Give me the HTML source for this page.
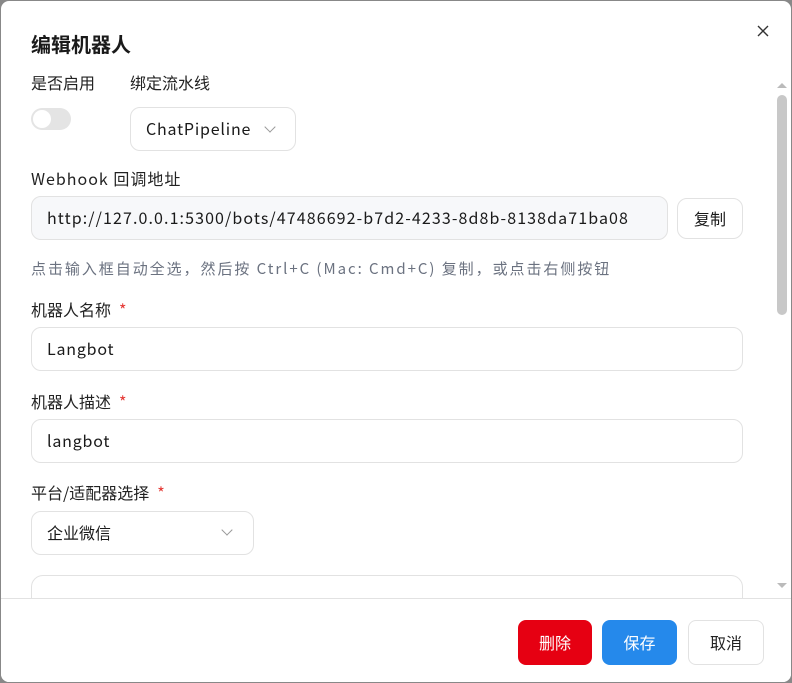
<!DOCTYPE html>
<html><head><meta charset="utf-8"><style>
*{box-sizing:border-box;margin:0;padding:0}
html,body{width:792px;height:683px;overflow:hidden;background:#888}
body{font-family:"Noto Sans CJK SC","Liberation Sans",sans-serif;color:#1a1a1a;position:relative;line-height:1.2}
.dlg{position:absolute;left:1px;top:1px;width:790px;height:681px;background:#fff;border-radius:8px;overflow:hidden}
.a{position:absolute}
.lbl{font-size:16px;color:#222}
.box{position:absolute;border:1px solid #e2e2e2;border-radius:10px;background:#fff;font-size:16px;display:flex;align-items:center;padding-left:15px}
.star{color:#e53935;margin-left:8px}
.chev{position:absolute;width:8px;height:8px;border-right:1.3px solid #999;border-bottom:1.3px solid #999;transform:rotate(45deg)}
.btn{position:absolute;top:619px;height:45px;border-radius:8px;font-size:16px;display:flex;align-items:center;justify-content:center}
</style></head><body>
<div class="dlg">
<div class="a" style="left:30px;top:31px;font-size:20px;font-weight:bold">编辑机器人</div>
<svg class="a" style="left:756px;top:24px" width="12" height="12" viewBox="0 0 12 12"><path d="M1 1L11 11M11 1L1 11" stroke="#333" stroke-width="1.4"/></svg>
<div class="a lbl" style="left:30px;top:72px">是否启用</div>
<div class="a lbl" style="left:129px;top:72px">绑定流水线</div>
<div class="a" style="left:30px;top:107px;width:40px;height:22px;border-radius:11px;background:#e4e4e4"><div style="position:absolute;left:2px;top:2px;width:18px;height:18px;border-radius:50%;background:#fff"></div></div>
<div class="box" style="left:129px;top:106px;width:166px;height:44px;letter-spacing:0.8px">ChatPipeline<div class="chev" style="left:135px;top:15px"></div></div>
<div class="a lbl" style="left:30px;top:168px;letter-spacing:1px">Webhook 回调地址</div>
<div class="box" style="left:30px;top:195px;width:637px;height:44px;background:#f7f8fa;white-space:nowrap;overflow:hidden;letter-spacing:1.1px">http://127.0.0.1:5300/bots/47486692-b7d2-4233-8d8b-8138da71ba08</div>
<div class="box" style="left:676px;top:197px;width:66px;height:41px;padding:0;justify-content:center">复制</div>
<div class="a" style="left:30px;top:259px;font-size:15px;color:#6b7280;white-space:nowrap;letter-spacing:1.95px">点击输入框自动全选，然后按 Ctrl+C (Mac: Cmd+C) 复制，或点击右侧按钮</div>
<div class="a lbl" style="left:30px;top:299px">机器人名称<span class="star">*</span></div>
<div class="box" style="left:30px;top:326px;width:712px;height:44px;letter-spacing:0.8px">Langbot</div>
<div class="a lbl" style="left:30px;top:391px">机器人描述<span class="star">*</span></div>
<div class="box" style="left:30px;top:418px;width:712px;height:44px;letter-spacing:0.8px">langbot</div>
<div class="a lbl" style="left:30px;top:482px">平台/适配器选择<span class="star">*</span></div>
<div class="box" style="left:30px;top:510px;width:223px;height:44px">企业微信<div class="chev" style="left:191px;top:14px"></div></div>
<div class="a" style="left:30px;top:574px;width:712px;height:40px;border:1px solid #e2e2e2;border-radius:12px"></div>
<div class="a" style="left:776px;top:94px;width:10px;height:220px;border-radius:5px;background:#c8c8c8"></div>
<div class="a" style="left:776px;top:82px;width:0;height:0;border-left:5px solid transparent;border-right:5px solid transparent;border-bottom:5px solid #bbb"></div>
<div class="a" style="left:776px;top:582px;width:0;height:0;border-left:5px solid transparent;border-right:5px solid transparent;border-top:5px solid #bbb"></div>
<div class="a" style="left:0;top:597px;width:790px;height:84px;background:#fff;border-top:1px solid #e2e2e2"></div>
<div class="btn" style="left:517px;width:74px;background:#e60012;color:#fff">删除</div>
<div class="btn" style="left:601px;width:75px;background:#2589eb;color:#fff">保存</div>
<div class="btn" style="left:687px;width:76px;border:1px solid #e2e2e2;color:#222">取消</div>
</div>
</body></html>
